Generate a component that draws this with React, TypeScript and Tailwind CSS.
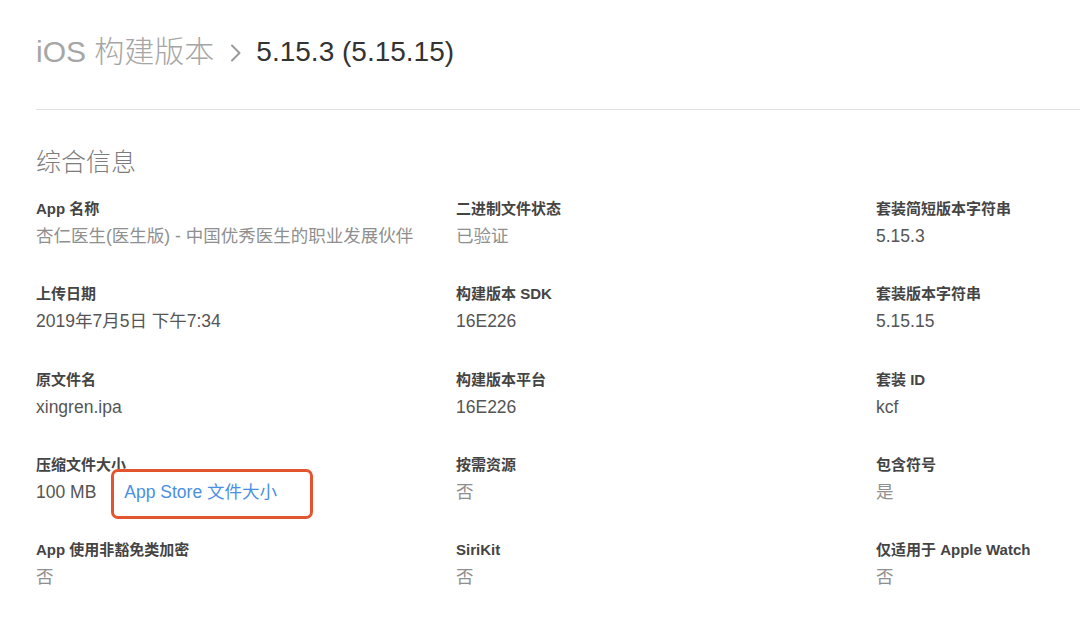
import React from 'react';

type Field = {
  label: string;
  value: string;
  muted?: boolean;
};

const fields: Field[] = [
  { label: 'App 名称', value: '杏仁医生(医生版) - 中国优秀医生的职业发展伙伴', muted: true },
  { label: '二进制文件状态', value: '已验证', muted: true },
  { label: '套装简短版本字符串', value: '5.15.3' },
  { label: '上传日期', value: '2019年7月5日 下午7:34' },
  { label: '构建版本 SDK', value: '16E226' },
  { label: '套装版本字符串', value: '5.15.15' },
  { label: '原文件名', value: 'xingren.ipa' },
  { label: '构建版本平台', value: '16E226' },
  { label: '套装 ID', value: 'kcf' },
  { label: '压缩文件大小', value: '100 MB' },
  { label: '按需资源', value: '否', muted: true },
  { label: '包含符号', value: '是', muted: true },
  { label: 'App 使用非豁免类加密', value: '否', muted: true },
  { label: 'SiriKit', value: '否', muted: true },
  { label: '仅适用于 Apple Watch', value: '否', muted: true },
];

export default function App() {
  return (
    <div className="w-[1080px] h-[636px] bg-white overflow-hidden font-['Liberation_Sans','Noto_Sans_CJK_SC',sans-serif]">
      <div className="pl-[36px]">
        {/* Breadcrumb header */}
        <div className="h-[104px] flex items-center leading-none">
          <span className="text-[30px] text-[#a6a6a6] font-light">iOS 构建版本</span>
          <svg className="ml-[16px] mr-[14px] mt-[2px]" width="12" height="20" viewBox="0 0 12 20" fill="none">
            <path d="M2 2.5l7.5 7.5L2 17.5" stroke="#9a9a9a" strokeWidth="2" strokeLinecap="round" strokeLinejoin="round" />
          </svg>
          <span className="text-[28px] text-[#333333]">5.15.3 (5.15.15)</span>
        </div>
        <div className="mt-[5px] h-px bg-[#e2e2e2]" />

        {/* Section */}
        <h2 className="mt-[37px] text-[25px] leading-[30px] text-[#7d7d7d] font-light">综合信息</h2>

        <div className="mt-[22px] grid grid-cols-[420px_420px_1fr] gap-y-[36.25px]">
          {fields.map((f) => (
            <div key={f.label}>
              <div className="text-[15px] leading-[20px] font-semibold text-[#444444]">{f.label}</div>
              {f.label === '压缩文件大小' ? (
                <div className="mt-[5px] flex items-center text-[17.5px] leading-[24px]">
                  <span className="text-[#555555]">{f.value}</span>
                  <span className="relative ml-[28px] text-[#4a90e2]">
                    App Store 文件大小
                    <span className="absolute left-[-13px] right-[-36px] top-[-11px] bottom-[-15px] border-[3px] border-[#e2552f] rounded-[7px]" />
                  </span>
                </div>
              ) : (
                <div
                  className={`mt-[5px] text-[17.5px] leading-[24px] ${f.muted ? 'text-[#8f8f8f]' : 'text-[#555555]'}`}
                >
                  {f.value}
                </div>
              )}
            </div>
          ))}
        </div>
      </div>
    </div>
  );
}
